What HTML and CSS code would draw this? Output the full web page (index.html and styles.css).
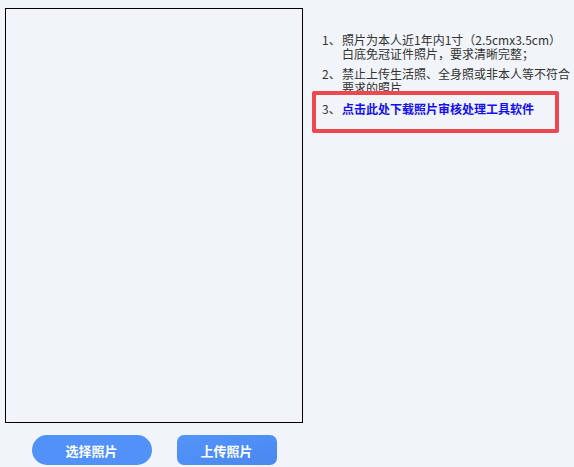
FILE: index.html
```html
<!DOCTYPE html>
<html lang="zh-CN">
<head>
  <meta charset="UTF-8" />
  <meta name="viewport" content="width=device-width, initial-scale=1.0"/>
  <title>上传照片</title>
  <link rel="stylesheet" href="styles.css">
</head>
<body>

  <div class="page">
    <div class="photo-col">
      <div class="photo-box"></div>
      <div class="btns">
        <button class="btn btn-select">选择照片</button>
        <button class="btn btn-upload">上传照片</button>
      </div>
    </div>

    <div class="tips">
      <ol class="tip-list">
        <li><span class="num">1、</span><span class="txt">照片为本人近1年内1寸（2.5cmx3.5cm）<br>白底免冠证件照片，要求清晰完整；</span></li>
        <li><span class="num">2、</span><span class="txt">禁止上传生活照、全身照或非本人等不符合要求的照片</span></li>
        <li class="download">
          <span class="num">3、</span><a class="txt" href="#">点击此处下载照片审核处理工具软件</a>
          <div class="mark"></div>
        </li>
      </ol>
    </div>
  </div>

</body>
</html>
```

FILE: styles.css
```css
body {
  margin: 0;
  padding: 0;
  background: #f1f4f8;
  font-family: "Microsoft YaHei", "Noto Sans CJK SC", sans-serif;
  font-size: 12px;
  color: #333;
}

.page {
  display: flex;
  padding: 8px 0 0 5px;
}

.photo-col {
  width: 298px;
}

.photo-box {
  box-sizing: border-box;
  width: 298px;
  height: 415px;
  border: 1px solid #000;
}

.btns {
  display: flex;
  justify-content: center;
  gap: 25px;
  margin-top: 12px;
}

.btn {
  height: 30px;
  border: none;
  color: #fff;
  font-family: inherit;
  font-size: 13px;
  font-weight: bold;
  cursor: pointer;
}

.btn-select {
  width: 120px;
  border-radius: 15px;
  background: #5191f8;
}

.btn-upload {
  width: 100px;
  border-radius: 7px;
  background: linear-gradient(to bottom right, #5495fa, #4a87ee);
}

.tips {
  padding: 25px 0 0 19px;
}

.tip-list {
  list-style: none;
  margin: 0;
  padding: 0;
  width: 250px;
}

.tip-list li {
  display: flex;
  line-height: 14px;
  margin-bottom: 6px;
}

.num {
  flex: none;
  width: 20px;
}

.txt {
  flex: 1;
}

.download {
  position: relative;
  margin-top: 7px;
}

.download a {
  color: #1410f0;
  font-weight: bold;
  text-decoration: none;
}

.mark {
  position: absolute;
  top: -11px;
  left: -10px;
  width: 247px;
  height: 42px;
  box-sizing: border-box;
  border: 4px solid #ef474f;
  border-radius: 2px;
}
```
